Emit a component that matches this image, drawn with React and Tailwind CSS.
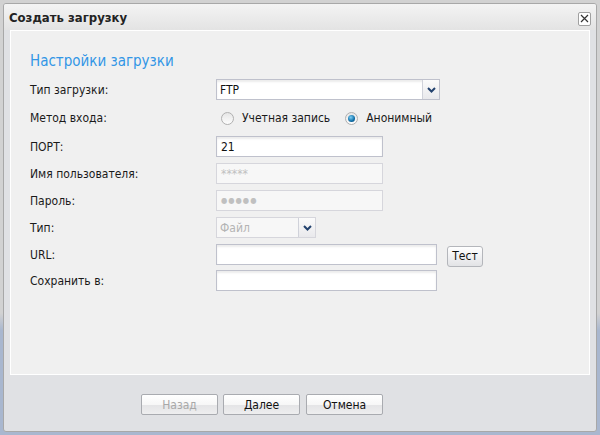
import React from "react";

const FONT = { fontFamily: '"DejaVu Sans Condensed", "DejaVu Sans", sans-serif' };

function Chevron() {
  return (
    <svg width="9" height="6" viewBox="0 0 9 6" aria-hidden="true">
      <path d="M1 1 L4.5 4.5 L8 1" fill="none" stroke="#23426e" strokeWidth="2" />
    </svg>
  );
}

function Select({ value, width, disabled }) {
  return (
    <div
      className={`flex h-[21px] border ${disabled ? "border-[#d6d6dc] bg-[#f7f7f7]" : "border-[#bfc1cc] bg-white shadow-[inset_0_2px_2px_rgba(0,0,0,0.08)]"}`}
      style={{ width }}
    >
      <div className={`flex-1 flex items-center pl-[3px] text-[12px] ${disabled ? "text-[#b4b4b4]" : "text-[#111]"}`}>
        {value}
      </div>
      <div className="w-[17px] flex items-center justify-center border-l border-[#d0d2da] bg-gradient-to-b from-[#fbfbfb] to-[#e9e9ec]">
        <Chevron />
      </div>
    </div>
  );
}

function Input({ width, value, placeholder, disabled, small }) {
  return (
    <div
      className={`h-[21px] flex items-center pl-[4px] border ${small ? "text-[8px] tracking-[1px]" : "text-[12px]"} ${disabled ? "border-[#d6d6dc] bg-[#f7f7f7] text-[#c0c0c0]" : "border-[#bfc1cc] bg-white text-[#111] shadow-[inset_0_2px_2px_rgba(0,0,0,0.08)]"}`}
      style={{ width }}
    >
      {value || placeholder}
    </div>
  );
}

function Radio({ checked }) {
  return (
    <span className="relative inline-flex w-[13px] h-[13px] rounded-full border border-[#b0b0b0] bg-gradient-to-b from-[#e6e6e6] to-[#fdfdfd] items-center justify-center">
      {checked && (
        <span className="w-[7px] h-[7px] rounded-full bg-[radial-gradient(circle_at_40%_35%,#7fd0f5,#0e6ea8_60%,#0a3e64)]" />
      )}
    </span>
  );
}

function Row({ label, children, className = "" }) {
  return (
    <div className={`flex items-center h-[21px] ${className}`}>
      <div className="w-[186px] text-[12px] text-[#1a1a1a]">{label}</div>
      {children}
    </div>
  );
}

function FooterButton({ children, disabled, className = "" }) {
  return (
    <button
      type="button"
      className={`w-[77px] h-[21px] rounded-[2px] border border-[#a9abb0] text-[12px] bg-[linear-gradient(180deg,#ffffff_0%,#f7f7f7_50%,#e4e4e6_52%,#eeeeef_100%)] ${disabled ? "text-[#a8a8a8]" : "text-[#111]"} ${className}`}
    >
      {children}
    </button>
  );
}

export default function App() {
  return (
    <div
      className="w-[600px] h-[435px] p-[3px] bg-[linear-gradient(180deg,#d2d2d2_0%,#d2d2d2_72%,#a9b7cf_76%,#a9b7cf_100%)]"
      style={FONT}
    >
      <div className="h-[429px] rounded-[3px] border border-[#a8a8a8] bg-[#e0e1e4] flex flex-col overflow-hidden">
        {/* Title bar */}
        <div className="h-[26px] flex items-center justify-between pl-[5px] pr-[5px] bg-gradient-to-b from-[#f4f4f4] to-[#e3e3e3]">
          <span className="text-[13px] font-bold text-[#222] mt-[1px]">Создать загрузку</span>
          <span className="w-[13px] h-[14px] mt-[3px] rounded-[2px] border border-[#a0a0a0] bg-white flex items-center justify-center">
            <svg width="9" height="9" viewBox="0 0 9 9" aria-hidden="true">
              <path d="M1 1 L8 8 M8 1 L1 8" stroke="#333" strokeWidth="1.2" />
            </svg>
          </span>
        </div>

        {/* Body panel */}
        <div className="mx-[6px] h-[345px] border border-white bg-[#f0f0f0] pl-[19px] pt-[20px]">
          <div className="h-[20px] text-[15px] text-[#3296e6] leading-[20px]">Настройки загрузки</div>
          <Row label="Тип загрузки:" className="mt-[8px]">
            <Select value="FTP" width={224} />
          </Row>
          <div className="flex items-center h-[22px] mt-[7px]">
            <div className="w-[191px] text-[12px] text-[#1a1a1a]">Метод входа:</div>
            <label className="flex items-center gap-[8px] text-[12px] text-[#1a1a1a]">
              <Radio />
              <span>Учетная запись</span>
            </label>
            <label className="flex items-center gap-[8px] text-[12px] text-[#1a1a1a] ml-[15px]">
              <Radio checked />
              <span>Анонимный</span>
            </label>
          </div>
          <div className="flex flex-col gap-[6px] mt-[7px]">
            <Row label="ПОРТ:">
              <Input width={167} value="21" />
            </Row>
            <Row label="Имя пользователя:">
              <Input width={167} placeholder="*****" disabled />
            </Row>
            <Row label="Пароль:">
              <Input width={167} placeholder="●●●●●" disabled small />
            </Row>
            <Row label="Тип:">
              <Select value="Файл" width={100} disabled />
            </Row>
            <Row label="URL:">
              <Input width={221} />
              <button
                type="button"
                className="ml-[10px] mt-[3px] w-[36px] h-[21px] rounded-[3px] border border-[#b4b6bb] text-[12px] text-[#111] bg-gradient-to-b from-white to-[#e2e3e6]"
              >
                Тест
              </button>
            </Row>
          </div>
          <Row label="Сохранить в:" className="mt-[5px]">
            <Input width={221} />
          </Row>
        </div>

        {/* Footer */}
        <div className="flex-1 flex items-start pt-[19px] pl-[137px]">
          <FooterButton disabled>Назад</FooterButton>
          <FooterButton className="ml-[5px]">Далее</FooterButton>
          <FooterButton className="ml-[6px]">Отмена</FooterButton>
        </div>
      </div>
    </div>
  );
}
